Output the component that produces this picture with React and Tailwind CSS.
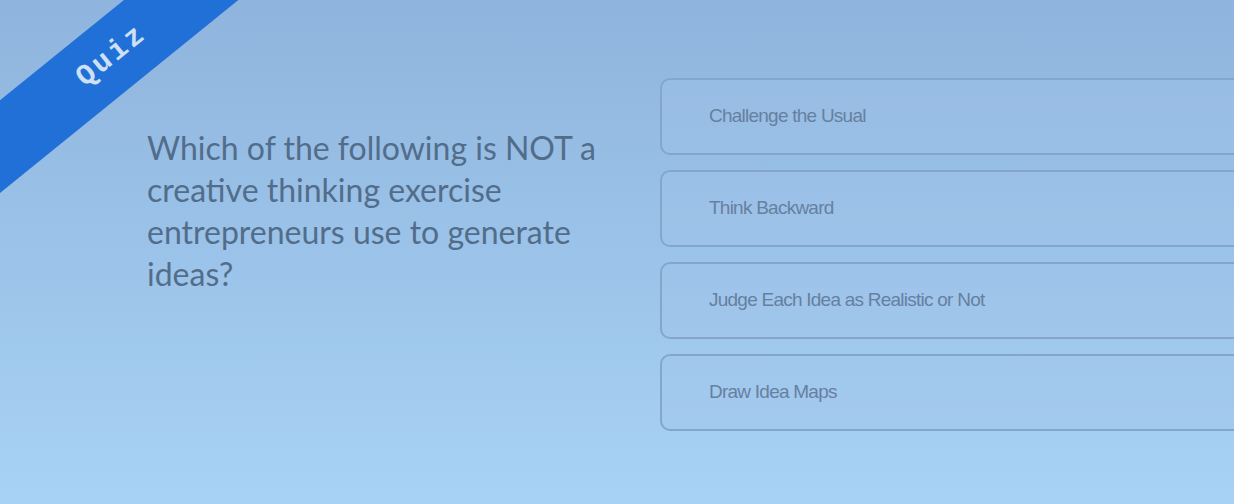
import React from 'react';

const options = [
  'Challenge the Usual',
  'Think Backward',
  'Judge Each Idea as Realistic or Not',
  'Draw Idea Maps',
];

// Corner ribbon
const QuizRibbon = () => (
  <div className="absolute left-[-88px] top-[20px] w-[400px] h-[72px] -rotate-[39deg] bg-[#2070d8] flex items-center justify-center">
    <span className="font-['Liberation_Mono',monospace] font-bold text-[29px] tracking-[0.1em] text-[#cfe0f5]">
      Quiz
    </span>
  </div>
);

const Option = ({ label }) => (
  <div className="w-[620px] h-[77px] flex items-center pl-[47px] rounded-[10px] border-2 border-[#84a6cc] bg-[#a0c4ea]/40">
    <span className="font-['Liberation_Sans',Arial,sans-serif] text-[19px] tracking-[-0.04em] text-[#6680a0]">
      {label}
    </span>
  </div>
);

export default function App() {
  return (
    <div className="relative w-[1234px] h-[504px] overflow-hidden bg-gradient-to-b from-[#8fb4dd] to-[#a8d2f5]">
      <QuizRibbon />

      <div className="flex h-full">
        {/* Question */}
        <div className="w-[660px] pl-[147px] pt-[127px] shrink-0">
          <p className="w-[465px] font-['Lato',sans-serif] text-[32px] leading-[42px] text-[#526d8a]">
            Which of the following is NOT a creative thinking exercise entrepreneurs use to generate ideas?
          </p>
        </div>

        {/* Options */}
        <div className="flex flex-col gap-[15px] pt-[78px]">
          {options.map((o) => (
            <Option key={o} label={o} />
          ))}
        </div>
      </div>
    </div>
  );
}
